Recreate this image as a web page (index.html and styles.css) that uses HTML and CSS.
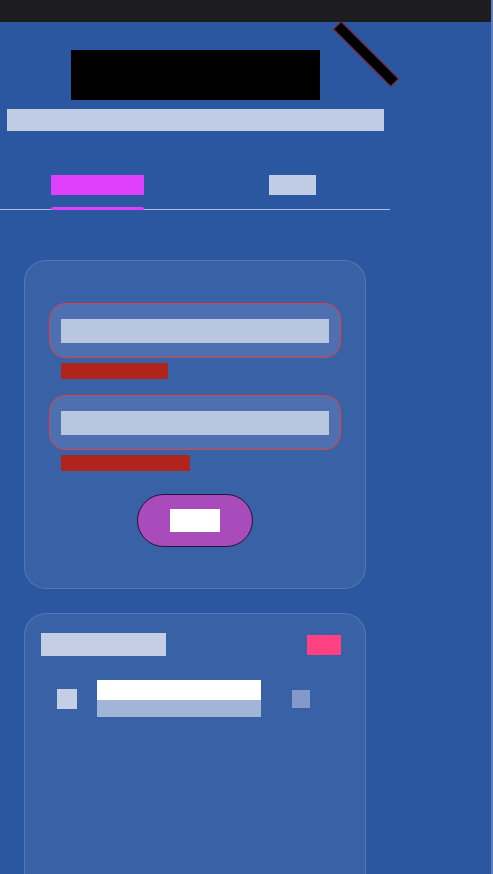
FILE: index.html
```html
<!DOCTYPE html>
<html lang="en">

<head>
    <meta charset="UTF-8">
    <meta name="viewport" content="width=device-width, initial-scale=1.0">
    <title>Panel</title>
    <link rel="stylesheet" href="styles.css">
</head>

<body class="page">
    <div class="topbar"></div>

    <main class="main">
        <!-- Cabecera -->
        <header class="header">
            <div class="header__title"></div>
            <div class="header__slash"></div>
            <div class="header__subtitle"></div>
        </header>

        <!-- Pestañas -->
        <nav class="tabs">
            <div class="tab tab--active">
                <span class="tab__label tab__label--wide"></span>
            </div>
            <div class="tab">
                <span class="tab__label tab__label--short"></span>
            </div>
        </nav>

        <!-- Formulario -->
        <section class="card card--form">
            <div class="field">
                <div class="field__box"><span class="field__text"></span></div>
                <span class="field__error field__error--one"></span>
            </div>
            <div class="field">
                <div class="field__box"><span class="field__text"></span></div>
                <span class="field__error field__error--two"></span>
            </div>
            <button class="btn"><span class="btn__text"></span></button>
        </section>

        <!-- Lista -->
        <section class="card card--list">
            <div class="list__head">
                <span class="list__title"></span>
                <span class="list__badge"></span>
            </div>
            <div class="item">
                <span class="item__check"></span>
                <div class="item__body">
                    <span class="item__name"></span>
                    <span class="item__meta"></span>
                </div>
                <span class="item__action"></span>
            </div>
        </section>
    </main>
</body>

</html>
```

FILE: styles.css
```css
* {
    padding: 0;
    margin: 0;
    box-sizing: border-box;
}

.page {
    background-color: #2b56a0;
    font-family: "Roboto", sans-serif;
    min-height: 874px;
    overflow: hidden;
    border-right: 2px solid #5f80bd;
}

.topbar {
    position: relative;
    z-index: 1;
    height: 22px;
    background-color: #1d1c21;
}

.main {
    width: 390px;
    display: flex;
    flex-direction: column;
}

/* Cabecera */
.header {
    position: relative;
    display: flex;
    flex-direction: column;
    align-items: center;
    padding-top: 28px;
}

.header__title {
    width: 249px;
    height: 50px;
    background-color: #000;
}

.header__slash {
    position: absolute;
    left: 326px;
    top: 27px;
    width: 80px;
    height: 10px;
    background-color: #000;
    outline: 1px solid #8a1f2a;
    transform: rotate(45deg);
    transform-origin: center;
}

.header__subtitle {
    margin-top: 9px;
    width: 377px;
    height: 22px;
    background-color: #c0cce3;
}

/* Pestañas */
.tabs {
    display: flex;
    margin-top: 44px;
    border-bottom: 1px solid #aebfe0;
}

.tab {
    position: relative;
    flex: 1;
    display: flex;
    justify-content: center;
    padding-bottom: 14px;
}

.tab__label {
    height: 20px;
    background-color: #c0cce3;
}

.tab__label--wide {
    width: 93px;
    background-color: #e040fb;
}

.tab__label--short {
    width: 47px;
}

.tab--active::after {
    content: "";
    position: absolute;
    bottom: -1px;
    left: 51px;
    width: 93px;
    height: 3px;
    border-radius: 2px 2px 0 0;
    background-color: #e040fb;
}

/* Tarjetas */
.card {
    margin: 0 24px;
    border: 1px solid rgba(255, 255, 255, 0.14);
    border-radius: 22px;
    background-color: rgba(255, 255, 255, 0.07);
}

.card--form {
    margin-top: 50px;
    padding: 42px 24px 41px;
    display: flex;
    flex-direction: column;
}

.field {
    display: flex;
    flex-direction: column;
    margin-bottom: 16px;
}

.field__box {
    height: 55px;
    padding: 15px 11px;
    border: 1px solid #e0403f;
    border-radius: 16px;
    background-color: #4e70b0;
}

.field__text {
    display: block;
    height: 24px;
    background-color: #b8c6e0;
}

.field__error {
    margin: 5px 0 0 12px;
    height: 16px;
    background-color: #b0241e;
}

.field__error--one {
    width: 107px;
}

.field__error--two {
    width: 129px;
}

.btn {
    align-self: center;
    margin-top: 7px;
    width: 116px;
    height: 53px;
    border: 1px solid #1a1530;
    border-radius: 27px;
    background-color: #aa4bbb;
    display: flex;
    justify-content: center;
    align-items: center;
    cursor: pointer;
}

.btn__text {
    width: 50px;
    height: 23px;
    background-color: #fff;
}

/* Lista */
.card--list {
    margin-top: 24px;
    min-height: 300px;
    padding: 19px 24px 0 16px;
}

.list__head {
    display: flex;
    justify-content: space-between;
    align-items: flex-start;
}

.list__title {
    width: 125px;
    height: 23px;
    background-color: #c4cfe6;
}

.list__badge {
    margin-top: 2px;
    width: 34px;
    height: 20px;
    background-color: #ff4081;
}

.item {
    display: flex;
    align-items: center;
    margin-top: 24px;
    padding-left: 16px;
}

.item__check {
    width: 20px;
    height: 20px;
    background-color: #c4cfe6;
}

.item__body {
    display: flex;
    flex-direction: column;
    margin-left: 20px;
    width: 164px;
}

.item__name {
    height: 20px;
    background-color: #fff;
}

.item__meta {
    height: 17px;
    background-color: #a3b5d6;
}

.item__action {
    margin-left: 31px;
    width: 18px;
    height: 18px;
    background-color: #8399c9;
}
```
